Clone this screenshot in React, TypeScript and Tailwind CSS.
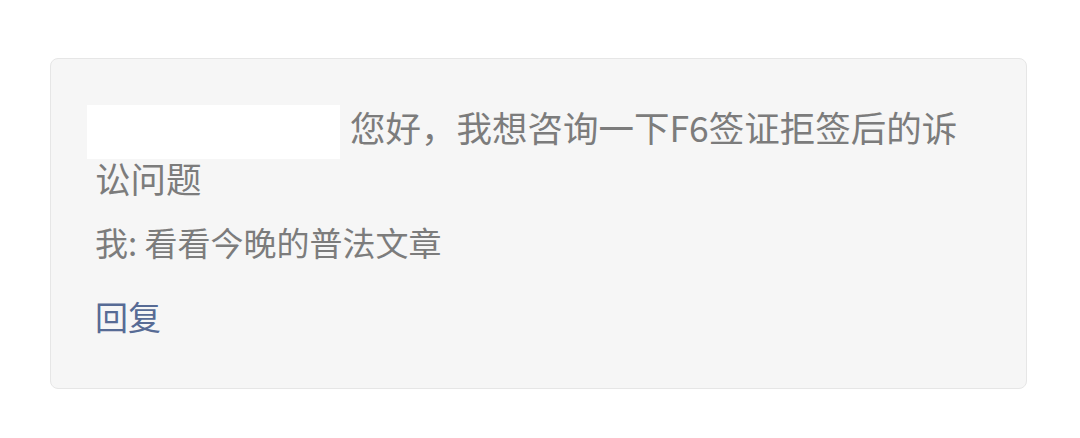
export default function App() {
  return (
    <div
      className="w-[1080px] h-[438px] bg-white pt-[58px] pl-[50px]"
      style={{ fontFamily: '"Noto Sans CJK SC", "Noto Sans", sans-serif' }}
    >
      <div className="w-[977px] h-[331px] rounded-[8px] border border-[#e6e6e6] bg-[#f6f6f6] pl-[44px] pr-[50px] pt-[45px]">
        <p className="text-[35.5px] leading-[46px] text-[#7c7c7c]">
          <span className="inline-block w-[253px] h-[54px] -my-[4px] -ml-[8px] mr-[10px] bg-white align-middle" />
          您好，我想咨询一下F6签证拒签后的诉讼问题
        </p>
        <p className="mt-[17px] text-[33px] leading-[48px] text-[#7c7c7c]">我: 看看今晚的普法文章</p>
        <p className="mt-[26px] text-[33px] leading-[48px] text-[#576b95]">回复</p>
      </div>
    </div>
  );
}
